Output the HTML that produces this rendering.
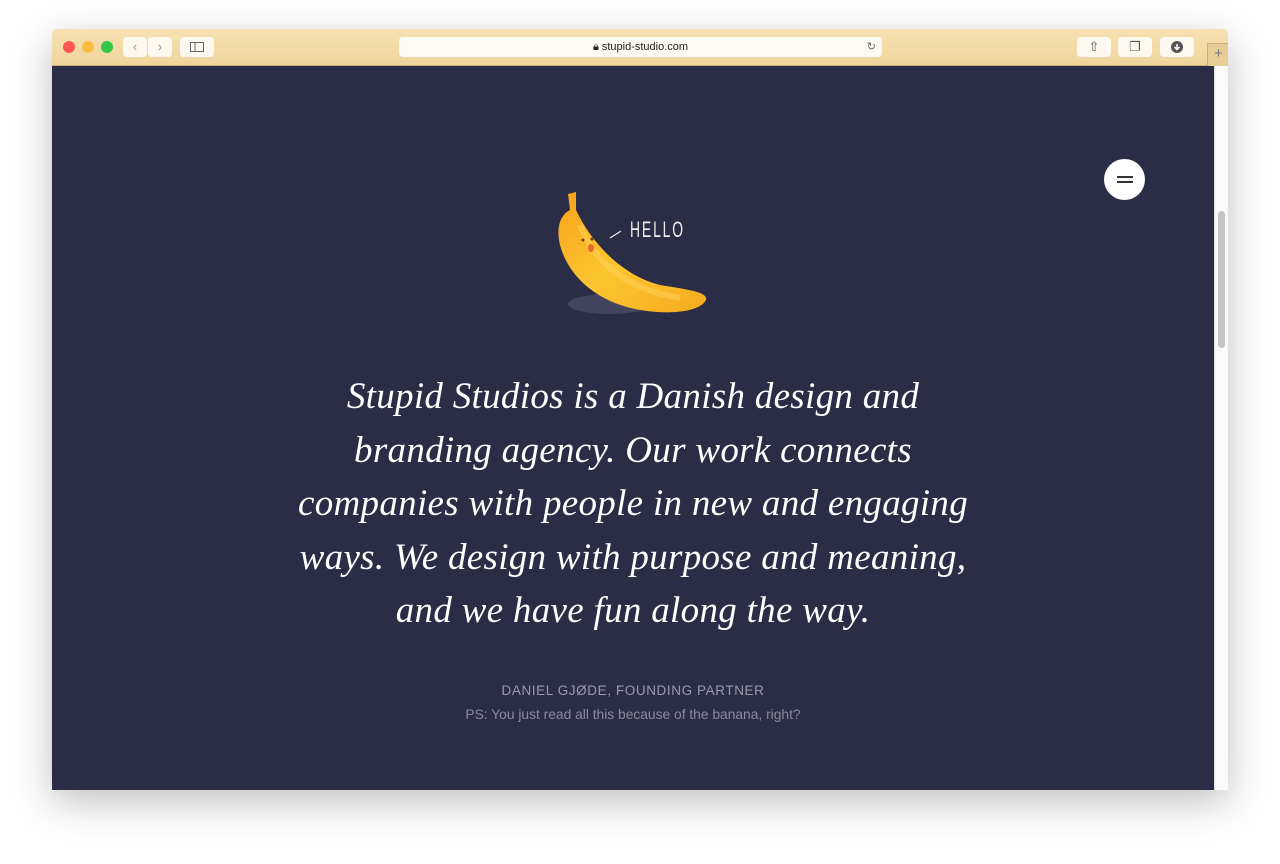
<html><head><style>
body{margin:0;width:1280px;height:864px;background:#fff;position:relative;overflow:hidden;font-family:"Liberation Sans",sans-serif}
.win{position:absolute;left:52px;top:29px;width:1176px;height:761px;box-shadow:0 12px 40px rgba(0,0,0,.25);border-radius:5px 5px 0 0;overflow:hidden;background:#fff}
.tb{position:absolute;left:0;top:0;width:1176px;height:36px;background:linear-gradient(#f7e2b3,#efd49c);border-bottom:1px solid #c9ad72}
.dot{position:absolute;top:12px;width:12px;height:12px;border-radius:50%}
.btn{position:absolute;top:8px;height:20px;background:#fdf9f0;border-radius:4px;color:#999;font-size:13px;text-align:center;line-height:20px}
.url{position:absolute;left:347px;top:8px;width:483px;height:20px;background:#fdfaf3;border-radius:4px;font-size:11px;text-align:center;line-height:20px;color:#222}
.content{position:absolute;left:0;top:37px;width:1162px;height:724px;background:#2b2c45}
.sb{position:absolute;left:1162px;top:37px;width:14px;height:724px;background:#fafafa;border-left:1px solid #ddd}
.q{position:absolute;left:52px;top:370px;width:1162px;text-align:center;color:#fff;font-family:"Liberation Serif",serif;font-style:italic;font-size:37px;line-height:53.5px;letter-spacing:.3px}
.name{position:absolute;left:52px;top:683px;width:1162px;text-align:center;color:#9a9bb0;font-size:13.5px;letter-spacing:.6px}
.ps{position:absolute;left:52px;top:707px;width:1162px;text-align:center;color:#8a8ba0;font-size:13.8px}
</style></head><body>
<div class="win">
<div class="tb">
<div class="dot" style="left:11px;background:#fc5753"></div>
<div class="dot" style="left:30px;background:#fdbc40"></div>
<div class="dot" style="left:49px;background:#33c748"></div>
<div class="btn" style="left:71px;width:24px">‹</div>
<div class="btn" style="left:96px;width:24px">›</div>
<div class="btn" style="left:128px;width:34px"><svg width="14" height="10" viewBox="0 0 14 10" style="margin-top:5px"><rect x=".5" y=".5" width="13" height="9" fill="none" stroke="#666"/><line x1="5" y1="0" x2="5" y2="10" stroke="#666"/></svg></div>
<div class="url">🔒︎ stupid-studio.com<span style="position:absolute;right:6px;color:#666">↻</span></div>
<div class="btn" style="left:1025px;width:34px;color:#555">⇧</div>
<div class="btn" style="left:1066px;width:34px;color:#555">❐</div>
<div class="btn" style="left:1108px;width:34px"><svg width="12" height="12" style="margin-top:4px"><circle cx="6" cy="6" r="6" fill="#555"/><path d="M6 3v5M3.5 6L6 8.5 8.5 6" stroke="#fff" stroke-width="1.5" fill="none"/></svg></div>
<div style="position:absolute;left:1155px;top:14px;width:21px;height:22px;background:#e6cd95;border:1px solid #c9ad72;color:#777;font-size:15px;text-align:center;line-height:20px">+</div>
</div>
<div class="content"></div>
<div class="sb"><div style="position:absolute;left:3px;top:145px;width:7px;height:137px;background:#c5c5c5;border-radius:4px"></div></div>
</div>
<div style="position:absolute;left:1104px;top:159px;width:41px;height:41px;border-radius:50%;background:#fff"><div style="position:absolute;left:13px;top:17px;width:16px;height:2px;background:#333"></div><div style="position:absolute;left:13px;top:22px;width:16px;height:2px;background:#333"></div></div>
<svg style="position:absolute;left:540px;top:180px" width="190" height="150" viewBox="0 0 190 150">
<defs><linearGradient id="g" x1="0" y1="0" x2="1" y2="1"><stop offset="0" stop-color="#f7a21b"/><stop offset=".5" stop-color="#fcc52f"/><stop offset="1" stop-color="#f6aa1f"/></linearGradient></defs>
<ellipse cx="70" cy="124" rx="42" ry="10" fill="#4a4b63" opacity=".8"/>
<path d="M28 14 L36 12 L36 30 C50 60 80 95 120 105 C150 110 168 112 166 120 C160 132 130 135 100 130 C55 122 28 95 20 65 C16 48 20 35 30 30 Z" fill="url(#g)"/>
<path d="M40 45 C55 85 90 110 140 118" stroke="#ffd35a" stroke-width="6" fill="none" opacity=".5"/>
<circle cx="43" cy="60" r="1.5" fill="#7a3a10"/><circle cx="52" cy="59" r="1.5" fill="#7a3a10"/>
<ellipse cx="51" cy="68" rx="3" ry="4" fill="#e56a2a"/>
<path d="M70 58 L81 51" stroke="#eee" stroke-width="1.2"/>
<text x="90" y="57" fill="#eee" font-family="Liberation Sans Narrow, Liberation Sans, sans-serif" font-size="22" letter-spacing="3" textLength="55" lengthAdjust="spacingAndGlyphs" font-weight="200">HELLO</text>
</svg>
<div class="q">Stupid Studios is a Danish design and<br>branding agency. Our work connects<br>companies with people in new and engaging<br>ways. We design with purpose and meaning,<br>and we have fun along the way.</div>
<div class="name">DANIEL GJØDE, FOUNDING PARTNER</div>
<div class="ps">PS: You just read all this because of the banana, right?</div>
</body></html>
